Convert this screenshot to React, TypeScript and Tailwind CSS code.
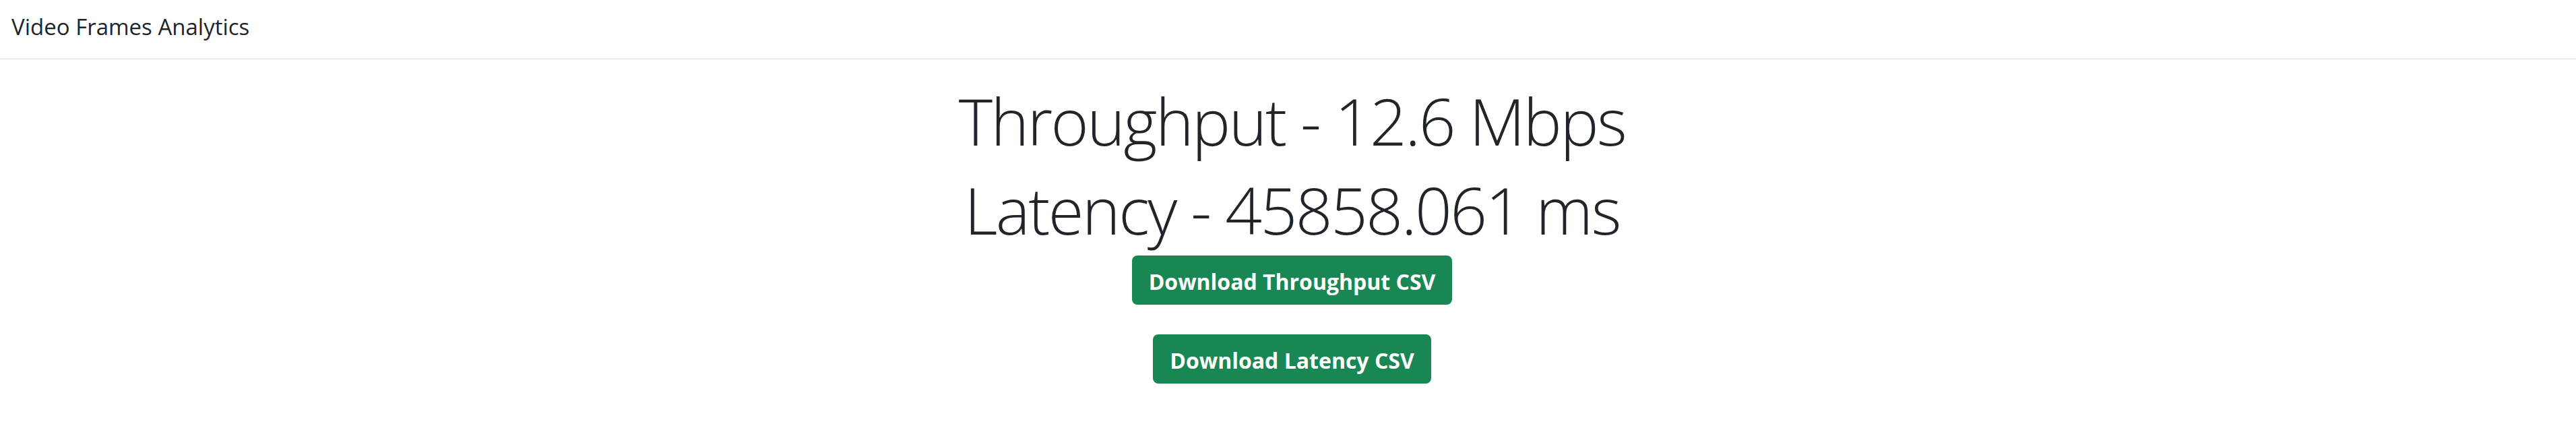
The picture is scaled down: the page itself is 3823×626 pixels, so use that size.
import React from 'react';

const FONT = "font-['Open_Sans','Noto_Sans',sans-serif]";

export default function App() {
  const downloadCsv = (name: string) => {
    console.log('download', name);
  };

  return (
    <div className={`min-h-screen bg-white text-[#212529] ${FONT}`}>
      <nav className="h-[88px] border-b border-[#dfdfdf] flex items-center pl-[17px] pb-[8px]">
        <span className="text-[33px] leading-none">Video Frames Analytics</span>
      </nav>

      <main className="flex flex-col items-center pt-[25px] pl-[12px]">
        <h1 className="text-[96px] font-light leading-[132px] tracking-[-2.5px]">Throughput - 12.6 Mbps</h1>
        <h1 className="text-[96px] font-light leading-[132px] tracking-[-2.5px]">Latency - 45858.061 ms</h1>
        <div className="flex flex-col items-center gap-[44px] mt-[2px]">
          <button
            onClick={() => downloadCsv('throughput')}
            className="h-[73px] px-[25px] pt-[4px] rounded-[8px] bg-[#198754] text-white text-[32px] font-bold"
          >
            Download Throughput CSV
          </button>
          <button
            onClick={() => downloadCsv('latency')}
            className="h-[73px] px-[25px] pt-[4px] rounded-[8px] bg-[#198754] text-white text-[32px] font-bold"
          >
            Download Latency CSV
          </button>
        </div>
      </main>
    </div>
  );
}
